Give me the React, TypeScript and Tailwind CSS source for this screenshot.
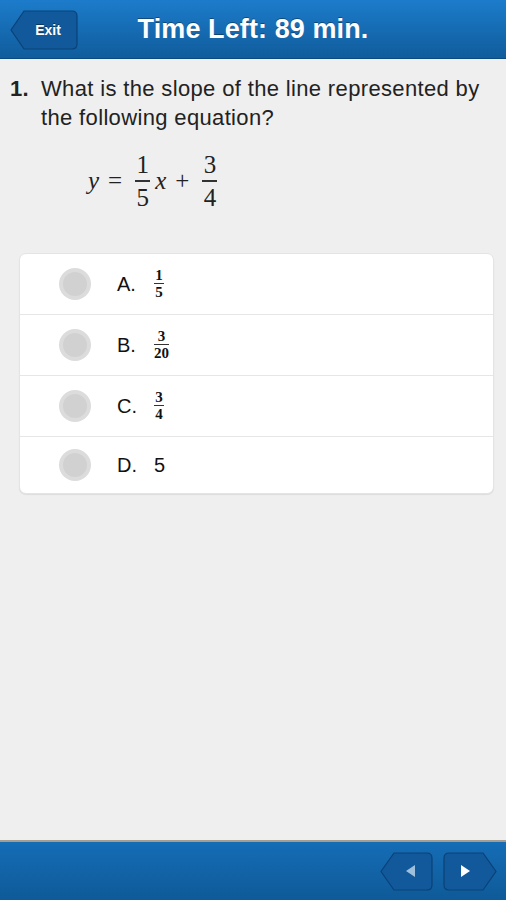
import React from "react";

const sans = { fontFamily: '"Liberation Sans", Arial, sans-serif' };
const serif = { fontFamily: '"Liberation Serif", "Times New Roman", serif' };

function Frac({ n, d, big }: { n: string; d: string; big?: boolean }) {
  return (
    <span
      className={`inline-flex flex-col items-center align-middle ${big ? "text-[25px] leading-[25px] mx-[4px]" : "text-[15px] leading-[14px] font-bold"}`}
      style={serif}
    >
      <span className={big ? "pb-[3px]" : "pb-[1px]"}>{n}</span>
      <span className={`block w-full ${big ? "h-[1.5px] min-w-[15px]" : "h-px min-w-[10px]"} bg-[#333]`} />
      <span className={big ? "pt-[3px]" : "pt-[1px]"}>{d}</span>
    </span>
  );
}

function Radio() {
  return (
    <div className="ml-[39px] w-[32px] h-[32px] rounded-full bg-[#dcdcdc] flex items-center justify-center">
      <div className="w-[24px] h-[24px] rounded-full bg-[#d1d1d1]" />
    </div>
  );
}

function Option({ letter, children, last }: { letter: string; children: React.ReactNode; last?: boolean }) {
  return (
    <div className={`flex items-center ${last ? "h-[56px]" : "h-[61px] border-b border-[#e6e6e6]"}`}>
      <Radio />
      <div className="ml-[26px] flex items-center text-[20px] text-[#111]" style={sans}>
        <span className="w-[37px]">{letter}.</span>
        {children}
      </div>
    </div>
  );
}

export default function App() {
  return (
    <div className="w-[506px] h-[900px] flex flex-col bg-[#efefef] overflow-hidden" style={sans}>
      {/* Header */}
      <div className="relative h-[59px] shrink-0 bg-gradient-to-b from-[#1c7ccb] to-[#105c9c] border-b border-[#0b4a80] flex items-center justify-center">
        <button className="absolute left-[10px] top-[10px] w-[68px] h-[40px] flex items-center justify-center">
          <svg className="absolute inset-0" width="68" height="40" viewBox="0 0 68 40">
            <path d="M14 1 H62 Q67 1 67 6 V34 Q67 39 62 39 H14 L1 20 Z" fill="#11599a" stroke="#0a4277" strokeWidth="1.2" />
          </svg>
          <span className="relative text-white font-bold text-[14px] ml-[8px]" style={{ textShadow: "0 -1px 0 rgba(0,0,0,0.4)" }}>Exit</span>
        </button>
        <div className="text-white font-bold text-[27px] tracking-[0.1px] mt-[1px]" style={{ textShadow: "0 -1px 0 rgba(0,0,0,0.35)" }}>
          Time Left: 89 min.
        </div>
      </div>

      {/* Content */}
      <div className="flex-1 flex flex-col">
        <div className="flex pl-[10px] pr-[8px] pt-[15px] text-[22px] leading-[29px] tracking-[0.35px] text-[#222]">
          <span className="font-bold w-[31px] shrink-0">1.</span>
          <span>What is the slope of the line represented by the following equation?</span>
        </div>
        <div className="flex items-center pl-[88px] mt-[20px] text-[25px] text-[#222]" style={serif}>
          <span className="italic">y</span>
          <span className="mx-[9px]">=</span>
          <Frac n="1" d="5" big />
          <span className="italic ml-[1px]">x</span>
          <span className="mx-[9px]">+</span>
          <Frac n="3" d="4" big />
        </div>

        <div className="ml-[19px] mr-[12px] mt-[43px] bg-white rounded-[7px] border border-[#e4e4e4] shadow-[0_1px_1px_rgba(0,0,0,0.08)]">
          <Option letter="A"><Frac n="1" d="5" /></Option>
          <Option letter="B"><Frac n="3" d="20" /></Option>
          <Option letter="C"><Frac n="3" d="4" /></Option>
          <Option letter="D" last><span>5</span></Option>
        </div>
      </div>

      {/* Footer */}
      <div className="h-[60px] shrink-0 border-t-[2px] border-[#a59d92] bg-gradient-to-b from-[#156db6] to-[#0f5a98] flex items-center justify-end pr-[9px] gap-[10px]">
        <button className="relative w-[53px] h-[39px] flex items-center justify-center">
          <svg className="absolute inset-0" width="53" height="39" viewBox="0 0 53 39">
            <path d="M14 1 H47 Q52 1 52 6 V33 Q52 38 47 38 H14 L1 19.5 Z" fill="#11599a" stroke="#0a4277" strokeWidth="1.2" />
          </svg>
          <svg className="relative ml-[8px]" width="10" height="12" viewBox="0 0 10 12">
            <path d="M9 0 V12 L0 6 Z" fill="#9ec0dc" />
          </svg>
        </button>
        <button className="relative w-[54px] h-[39px] flex items-center justify-center">
          <svg className="absolute inset-0" width="54" height="39" viewBox="0 0 54 39">
            <path d="M6 1 H40 L53 19.5 L40 38 H6 Q1 38 1 33 V6 Q1 1 6 1 Z" fill="#11599a" stroke="#0a4277" strokeWidth="1.2" />
          </svg>
          <svg className="relative mr-[10px]" width="10" height="12" viewBox="0 0 10 12">
            <path d="M1 0 V12 L10 6 Z" fill="#ffffff" />
          </svg>
        </button>
      </div>
    </div>
  );
}
